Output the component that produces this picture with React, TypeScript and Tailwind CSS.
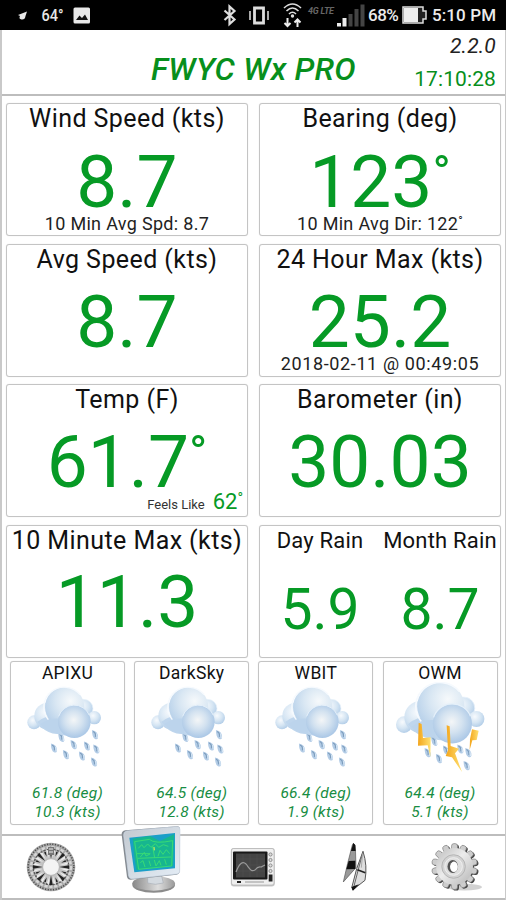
import type { ReactNode } from "react";

const CARD = "rounded-[3px] border border-[#c4c4c4] bg-white shadow-[0_0_1px_#d8d8d8]";
const BIG = "text-center text-[73px] leading-[58px] text-[#069a25] whitespace-nowrap";
const NOTE = "mt-[2px] text-center text-[18px] leading-[22px] text-[#222] whitespace-nowrap";

function Card({ title, children }: { title: string; children: ReactNode }) {
  return (
    <section className={`h-[133px] overflow-hidden ${CARD}`}>
      <h2 className="text-center text-[25px] leading-[30px] tracking-[0.42px] text-[#111] whitespace-nowrap">{title}</h2>
      {children}
    </section>
  );
}

function Degree() {
  return <span className="align-[17px] text-[49px] leading-[0]">°</span>;
}

function Drop({ x, y }: { x: number; y: number }) {
  return (
    <g transform={`translate(${x} ${y}) scale(1.15)`}>
      <path d="M-8-12 Q9-9 8 8 Q6 14 0 11 Q-8 7-8-12Z" fill="#b3cce6" />
      <path d="M-5-8 Q3-4 1 6" stroke="#7d9dbd" strokeWidth="3" fill="none" />
      <path d="M4-3 L6 9" stroke="#d7e6f4" strokeWidth="3" />
    </g>
  );
}

function Cloud() {
  return (
    <g>
      <ellipse cx="102" cy="201" rx="20" ry="21" fill="url(#puff)" />
      <circle cx="143" cy="182" r="40" fill="url(#puff)" />
      <path d="M112 200 Q150 165 240 190 L232 235 Q205 246 172 236 Q142 234 124 214Z" fill="#bfd6ed" />
      <circle cx="251" cy="160" r="28" fill="url(#puff)" stroke="#eaf3fb" strokeWidth="2" />
      <circle cx="283" cy="187" r="20" fill="url(#puff)" />
      <circle cx="194" cy="155" r="59" fill="url(#puffBig)" />
      <path d="M145 193 A60 59 0 0 1 240 118" fill="none" stroke="#f6fafe" strokeWidth="4" />
      <path d="M120 206 Q150 186 182 190 L180 236 Q144 234 120 206Z" fill="#bcd4ec" />
      <ellipse cx="223" cy="199" rx="49" ry="49" fill="url(#puffFront)" />
      <path d="M176 183 A49 49 0 0 1 268 180" fill="none" stroke="#e5f0fa" strokeWidth="3" />
    </g>
  );
}

const DROPS = [[184, 246], [285, 238], [162, 278], [221, 268], [261, 272], [289, 281], [198, 298], [246, 302], [282, 320]];
const STORM_DROPS = [[184, 258], [262, 281], [164, 292], [219, 284], [286, 292], [198, 310], [281, 331]];

function Weather({ storm }: { storm?: boolean }) {
  return (
    <svg viewBox="30 80 345 270" className="h-[90px] w-[115px]" aria-hidden="true">
      <defs>
        <radialGradient id="puff" cx=".4" cy=".35" r=".7">
          <stop offset="0" stopColor="#f7fafd" />
          <stop offset=".55" stopColor="#d5e5f3" />
          <stop offset="1" stopColor="#afcbe7" />
        </radialGradient>
        <radialGradient id="puffBig" cx=".65" cy=".35" r=".75">
          <stop offset="0" stopColor="#f6f9fb" />
          <stop offset=".5" stopColor="#d9e7f3" />
          <stop offset="1" stopColor="#b5cfe9" />
        </radialGradient>
        <radialGradient id="puffFront" cx=".48" cy=".45" r=".55">
          <stop offset="0" stopColor="#f4f6f7" />
          <stop offset=".5" stopColor="#d3e2f0" />
          <stop offset="1" stopColor="#aac7e6" />
        </radialGradient>
        <linearGradient id="bolt" x1="0" y1="0" x2="1" y2="0">
          <stop offset="0" stopColor="#f3a51c" />
          <stop offset="1" stopColor="#ffe171" />
        </linearGradient>
      </defs>
      {storm ? (
        <>
          <g transform="matrix(1.2 0 0 1.2 -29.4 -33.4)">
            <Cloud />
          </g>
          {STORM_DROPS.map(([x, y]) => (
            <Drop key={`${x}-${y}`} x={x} y={y} />
          ))}
          <path d="M137 202 L146 206 L150 248 L173 246 L172 305 L164 270 L135 271Z" fill="url(#bolt)" />
          <path d="M221 210 L230 213 L233 272 L258 280 L246 294 L267 350 L237 306 L218 302 L225 285Z" fill="url(#bolt)" />
          <path d="M297 222 L317 226 L311 254 L298 255 L290 284 L291 252Z" fill="url(#bolt)" />
        </>
      ) : (
        <>
          {DROPS.map(([x, y]) => (
            <Drop key={`${x}-${y}`} x={x} y={y} />
          ))}
          <Cloud />
        </>
      )}
    </svg>
  );
}

const SOURCES = [
  { name: "APIXU", deg: "61.8 (deg)", kts: "10.3 (kts)", storm: false },
  { name: "DarkSky", deg: "64.5 (deg)", kts: "12.8 (kts)", storm: false },
  { name: "WBIT", deg: "66.4 (deg)", kts: "1.9 (kts)", storm: false },
  { name: "OWM", deg: "64.4 (deg)", kts: "5.1 (kts)", storm: true },
];

function CompassIcon() {
  const rays = Array.from({ length: 16 }, (_, i) => i * 22.5);
  return (
    <svg viewBox="-25 -25 50 50" className="-ml-[2px] h-[50px] w-[50px]" aria-hidden="true">
      <circle r="24.3" fill="#a9a9a9" />
      <circle r="22.8" fill="none" stroke="#4d4d4d" strokeWidth="1.6" strokeDasharray="1.2 1.5" />
      <circle r="19.8" fill="none" stroke="#d6d6d6" strokeWidth="2.6" strokeDasharray="3.2 1.7" />
      <circle r="17.6" fill="none" stroke="#5a5a5a" strokeWidth="1.6" strokeDasharray="2 1.4" />
      <circle r="16.5" fill="#c4c4c4" />
      {rays.map((a, i) => (
        <g key={a} transform={`rotate(${a})`}>
          <path d={i % 2 ? "M-1-16 L0-11 L1-16Z" : "M-1.7-18 L0-8 L1.7-18Z"} fill="#222" />
          <path d="M2-18 L1.5-9 L4-16Z" fill="#ededed" />
        </g>
      ))}
      <path d="M-3-20H3V-12H-3Z" fill="#777" />
      <path d="M-2-18H2M-2-15H2" stroke="#eee" />
      <circle r="8.4" fill="#f3f3f3" stroke="#aaa" strokeWidth=".8" />
    </svg>
  );
}

function MonitorIcon() {
  return (
    <svg viewBox="360 0 182 215" className="h-[71.67px] w-[60.67px]" aria-hidden="true">
      <defs>
        <linearGradient id="frame" x1="0" y1="0" x2="1" y2="1">
          <stop offset="0" stopColor="#c3c9d0" />
          <stop offset="1" stopColor="#e4edf6" />
        </linearGradient>
        <linearGradient id="base" x1="0" y1="0" x2="1" y2="0">
          <stop offset="0" stopColor="#888" />
          <stop offset=".6" stopColor="#ddd" />
          <stop offset="1" stopColor="#999" />
        </linearGradient>
      </defs>
      <ellipse cx="461" cy="186" rx="64" ry="23" fill="#8b8b8b" />
      <ellipse cx="461" cy="181" rx="64" ry="22" fill="url(#base)" />
      <path d="M443 158 L484 155 L490 180 Q466 188 443 180Z" fill="#d4dae0" stroke="#a7aeb5" strokeWidth="2" />
      <path d="M376 22 L530 10 Q540 9 540 20 L539 145 Q539 154 529 155 L392 170 Q383 171 381 162 L365 35 Q364 24 376 22Z" fill="#858b92" />
      <path d="M381 24 L530 11 Q540 10 540 20 L539 145 Q539 152 529 153 L397 167 Q388 168 386 159 L371 37 Q370 26 381 24Z" fill="url(#frame)" stroke="#cbd8e5" strokeWidth="2" />
      <path d="M388 44 L525 30 L525 136 L403 148Z" fill="#1b9fc8" />
      <path d="M398 47 L450 39 L480 54 L522 34 L519 130 L409 141 L402 92Z" fill="#17b68f" />
      <g fill="none" stroke="#38db75" strokeWidth="3">
        <path d="M404 56 L448 49 Q464 64 518 53 L515 129 L416 139Z" />
        <path d="M415 76 L425 65 L432 74 L443 63 L453 73 L466 62 L476 73 L490 65 L505 70M411 92 H451 M458 70 L464 105 M421 102 L433 88 L438 99 L450 93 M474 100 L480 82 L489 94 L499 80 L509 92M421 119 L429 113 L435 132 M447 113 L452 129 M463 111 L468 129 L478 113 L483 127 M494 109 L499 125 M413 106 L513 102" />
      </g>
      <path d="M462 72 L463 82" fill="none" stroke="#f0ed50" strokeWidth="3" />
    </svg>
  );
}

function ScopeIcon() {
  return (
    <svg viewBox="0 0 46 41" className="h-[41px] w-[46px]" aria-hidden="true">
      <rect x=".8" y="1" width="44" height="38.5" rx="3" fill="#c9c9c9" />
      <rect x="1.5" y="1.5" width="42.5" height="36.5" rx="2" fill="#efefef" stroke="#aaa" strokeWidth=".6" />
      <rect x="3" y="4.5" width="34.5" height="28" rx="1" fill="#191919" />
      <rect x="6" y="6.5" width="29" height="24" fill="#454545" />
      <path d="M6 12H35M6 18H35M6 24H35M13 7V30M20 7V30M27 7V30" stroke="#525252" strokeWidth=".6" />
      <path d="M6 25 Q11 12 16 17 C20 22 21 25 25 23 Q28 19 31 20 L35 18" fill="none" stroke="#999" strokeWidth="1.2" />
      <g fill="#ddd" stroke="#777" strokeWidth=".8">
        <circle cx="40.5" cy="7.5" r="1.6" />
        <circle cx="40.5" cy="13" r="1.6" />
        <circle cx="40.5" cy="18.5" r="1.6" />
        <circle cx="40.5" cy="24" r="1.6" />
      </g>
      <rect x="38.7" y="27.5" width="3.8" height="7" fill="#222" />
      <rect x="7" y="34" width="4" height="2" fill="#222" />
      <path d="M15 35H34" stroke="#999" />
    </svg>
  );
}

function SailIcon() {
  return (
    <svg viewBox="268 68 76 148" className="ml-[2px] h-[49.33px] w-[25.33px]" aria-hidden="true">
      <path d="M302 72 L308 78 L310 145 Q293 164 272 188 Q284 133 299 77Z" fill="#999" stroke="#555" strokeWidth="2" />
      <path d="M302 71 L307 76 L309 95 L295 95Z" fill="#111" />
      <path d="M288 125 L308 124 L308 149 L281 150Z" fill="#111" />
      <path d="M331 96 Q345 139 337 183 L300 212 L298 202 Q310 146 331 96Z" fill="#dedede" stroke="#555" strokeWidth="3" />
      <path d="M331 97 L301 212" stroke="#666" strokeWidth="3" />
      <path d="M314 151 L338 160" stroke="#222" strokeWidth="5" />
      <path d="M330 102 L326 145" stroke="#aaa" strokeWidth="3" />
      <path d="M296 203 L319 195 L301 214Z" fill="#111" />
    </svg>
  );
}

function GearIcon() {
  const teeth = Array.from({ length: 14 }, (_, i) => (i * 360) / 14);
  return (
    <svg viewBox="-25 -25 53 51" className="ml-[3px] h-[50px] w-[52px]" aria-hidden="true">
      <defs>
        <linearGradient id="metal" x1="0" y1="0" x2="1" y2="1">
          <stop offset="0" stopColor="#bcbcbc" />
          <stop offset=".45" stopColor="#ececec" />
          <stop offset="1" stopColor="#b4b4b4" />
        </linearGradient>
      </defs>
      <ellipse cx="10" cy="21" rx="18" ry="3.5" fill="#d2d2d2" />
      <g transform="translate(1.4 1)" fill="#444">
        {teeth.map((a) => (
          <rect key={a} x="-3.1" y="-23.4" width="6.2" height="8" rx="2.6" transform={`rotate(${a})`} />
        ))}
        <circle r="18.5" />
      </g>
      <g fill="#cdcdcd" stroke="#777" strokeWidth=".6">
        {teeth.map((a) => (
          <rect key={a} x="-3.1" y="-23.4" width="6.2" height="9" rx="2.6" transform={`rotate(${a})`} />
        ))}
      </g>
      <circle r="18.8" fill="url(#metal)" />
      <circle cx="-1" r="12" fill="#d2d2d2" stroke="#b4b4b4" />
      <circle cx="-1" r="9" fill="#dedede" stroke="#f0f0f0" />
      <ellipse cx="-1.8" rx="5.4" ry="6.6" fill="#555" />
      <ellipse cx="-.6" cy=".3" rx="4" ry="5.3" fill="#fff" />
    </svg>
  );
}

function StatusBar() {
  return (
    <div className="flex h-[30px] items-center bg-black text-[#ececec]">
      <svg viewBox="0 0 90 30" className="h-[30px] w-[100px] shrink-0" preserveAspectRatio="xMinYMid meet" aria-hidden="true">
        <path d="M18 15 L27 11.500 L25.500 16 Q25 20 21.500 19.500 Q18.500 19 20 16Z" fill="#e8e8e8" />
        <text x="41.500" y="21" fontFamily="Roboto" fontSize="16" fontWeight="500" fill="#e8e8e8" textLength="22" lengthAdjust="spacingAndGlyphs">64°</text>
        <rect x="73.500" y="7.500" width="16.500" height="16" rx="1.500" fill="#e8e8e8" />
        <path d="M76 20 L79.500 15.500 L82 18 L85 14.500 L88 20Z" fill="#111" />
      </svg>
      <svg viewBox="215 0 151 30" className="ml-[115px] h-[30px] w-[151px] shrink-0" fill="none" aria-hidden="true">
        <path d="M224.500 10.500 L234.500 19.500 L229.500 24 V6.500 L234.500 11 L224.500 20" stroke="#ddd" strokeWidth="2.200" />
        <path d="M254.500 8 H263.500 V23 H254.500Z" stroke="#ddd" strokeWidth="2.800" />
        <path d="M250 11V20M268 11V20" stroke="#aaa" strokeWidth="2" />
        <path d="M284 8 Q292.500 0 301 8 M286.500 11 Q292.500 5 298.500 11 M289 14 Q292.500 10.500 296 14" stroke="#ddd" strokeWidth="1.600" />
        <circle cx="292.500" cy="16" r="1.700" fill="#ddd" />
        <path d="M287.500 18V26M284.500 23 L287.500 26 L290.500 23M297.500 27V19.500M294.500 22.500 L297.500 19.500 L300.500 22.500" stroke="#eee" strokeWidth="2" />
        <text x="308" y="14" fontFamily="Roboto" fontSize="9" fontStyle="italic" fontWeight="700" fill="#666" textLength="26">4G LTE</text>
        <path d="M339 23V26.500M344.500 18V26.500" stroke="#eee" strokeWidth="4" />
        <path d="M350.500 14V26.500M356.500 9V26.500M362.500 4.500V26.500" stroke="#444" strokeWidth="4" />
      </svg>
      <span className="ml-[2px] w-[34px] whitespace-nowrap text-[17px] font-medium leading-[20px] tracking-[-0.5px]">68%</span>
      <svg viewBox="0 0 26 18" className="h-[18px] w-[26px] shrink-0" aria-hidden="true">
        <path d="M1 1H21V5H24V13H21V17H1Z" fill="#222" stroke="#ddd" strokeWidth="1.500" />
        <path d="M2 2H16V16H2Z" fill="#ededed" />
      </svg>
      <span className="ml-[4px] whitespace-nowrap text-[17px] font-medium leading-[20px] tracking-[0.1px]">5:10 PM</span>
    </div>
  );
}

export default function App() {
  return (
    <div className="flex h-[900px] w-[506px] flex-col overflow-hidden bg-white font-['Roboto',sans-serif]">
      <StatusBar />
      <div className="flex flex-1 flex-col border-l-2 border-r border-l-[#c9c9c9] border-r-[#c9c9c9]">
        <header className="grid h-[66px] grid-cols-[1fr_208px_1fr] border-b-2 border-[#bdbdbd]">
          <div />
          <h1 className="pt-[19px] text-center text-[32px] font-medium italic leading-[40px] tracking-[0.2px] text-[#078f1c] whitespace-nowrap">FWYC Wx PRO</h1>
          <div className="pr-[9px] pt-[3px] text-right text-[21px]">
            <p className="italic leading-[26px] tracking-[0.2px] text-[#222]">2.2.0</p>
            <p className="pt-[6px] leading-[28px] tracking-[0.1px] text-[#078f1c]">17:10:28</p>
          </div>
        </header>
        <main className="flex-1">
          <div className="ml-[4px] mt-[7px] grid w-[496px] grid-cols-[242px_242px] gap-x-[11px] gap-y-[7.5px]">
            <Card title="Wind Speed (kts)">
              <p className={`mt-[19px] ${BIG}`}>8.7</p>
              <p className={`tracking-[0.32px] ${NOTE}`}>10 Min Avg Spd: 8.7</p>
            </Card>
            <Card title="Bearing (deg)">
              <p className={`mt-[19px] ${BIG}`}>123<Degree /></p>
              <p className={`tracking-[0.32px] ${NOTE}`}>
                10 Min Avg Dir: 122<span className="align-[5px] text-[12px] leading-[0]">°</span>
              </p>
            </Card>
            <Card title="Avg Speed (kts)">
              <p className={`mt-[18px] ${BIG}`}>8.7</p>
            </Card>
            <Card title="24 Hour Max (kts)">
              <p className={`mt-[18px] ${BIG}`}>25.2</p>
              <p className={`tracking-[0.62px] ${NOTE}`}>2018-02-11 @ 00:49:05</p>
            </Card>
            <Card title="Temp (F)">
              <p className={`mt-[18px] ${BIG}`}>61.7<Degree /></p>
              <div className="flex items-baseline justify-end gap-[8px] pr-[4px] pt-[1px] leading-[20px]">
                <span className="text-[13px] text-[#333]">Feels Like</span>
                <span className="text-[22px] text-[#069a25]">62<span className="align-[6px] text-[15px] leading-[0]">°</span></span>
              </div>
            </Card>
            <Card title="Barometer (in)">
              <p className={`mt-[18px] ${BIG}`}>30.03</p>
            </Card>
            <Card title="10 Minute Max (kts)">
              <p className={`mt-[17px] ${BIG}`}>11.3</p>
            </Card>
            <section className={`grid h-[133px] grid-cols-2 text-center ${CARD}`}>
              <div className="whitespace-nowrap">
                <h2 className="text-[22px] leading-[30px] tracking-[0.2px] text-[#111]">Day Rain</h2>
                <p className="mt-[21px] text-[57px] leading-[66px] text-[#069a25]">5.9</p>
              </div>
              <div className="whitespace-nowrap">
                <h2 className="text-[22px] leading-[30px] tracking-[0.2px] text-[#111]">Month Rain</h2>
                <p className="mt-[21px] text-[57px] leading-[66px] text-[#069a25]">8.7</p>
              </div>
            </section>
          </div>
          <div className="ml-[8px] mt-[3px] grid grid-cols-[115px_115px_115px_115px] gap-x-[9.2px]">
            {SOURCES.map((s) => (
              <section key={s.name} className={`flex h-[164px] flex-col items-center ${CARD}`}>
                <h3 className="text-[17.5px] leading-[22px] tracking-[0.3px] text-[#111]">{s.name}</h3>
                <div className="-mt-[2px] h-[90px]">
                  <Weather storm={s.storm} />
                </div>
                <div className="mt-[12px] text-center text-[15.5px] italic leading-[19.6px] tracking-[0.25px] text-[#188d43]">
                  <p>{s.deg}</p>
                  <p>{s.kts}</p>
                </div>
              </section>
            ))}
          </div>
        </main>
        <nav className="grid h-[66px] grid-cols-5 items-center justify-items-center border-y-2 border-[#bdbdbd]">
          <CompassIcon />
          <div className="-ml-[5px] -mt-[16px]">
            <MonitorIcon />
          </div>
          <ScopeIcon />
          <SailIcon />
          <GearIcon />
        </nav>
      </div>
    </div>
  );
}
